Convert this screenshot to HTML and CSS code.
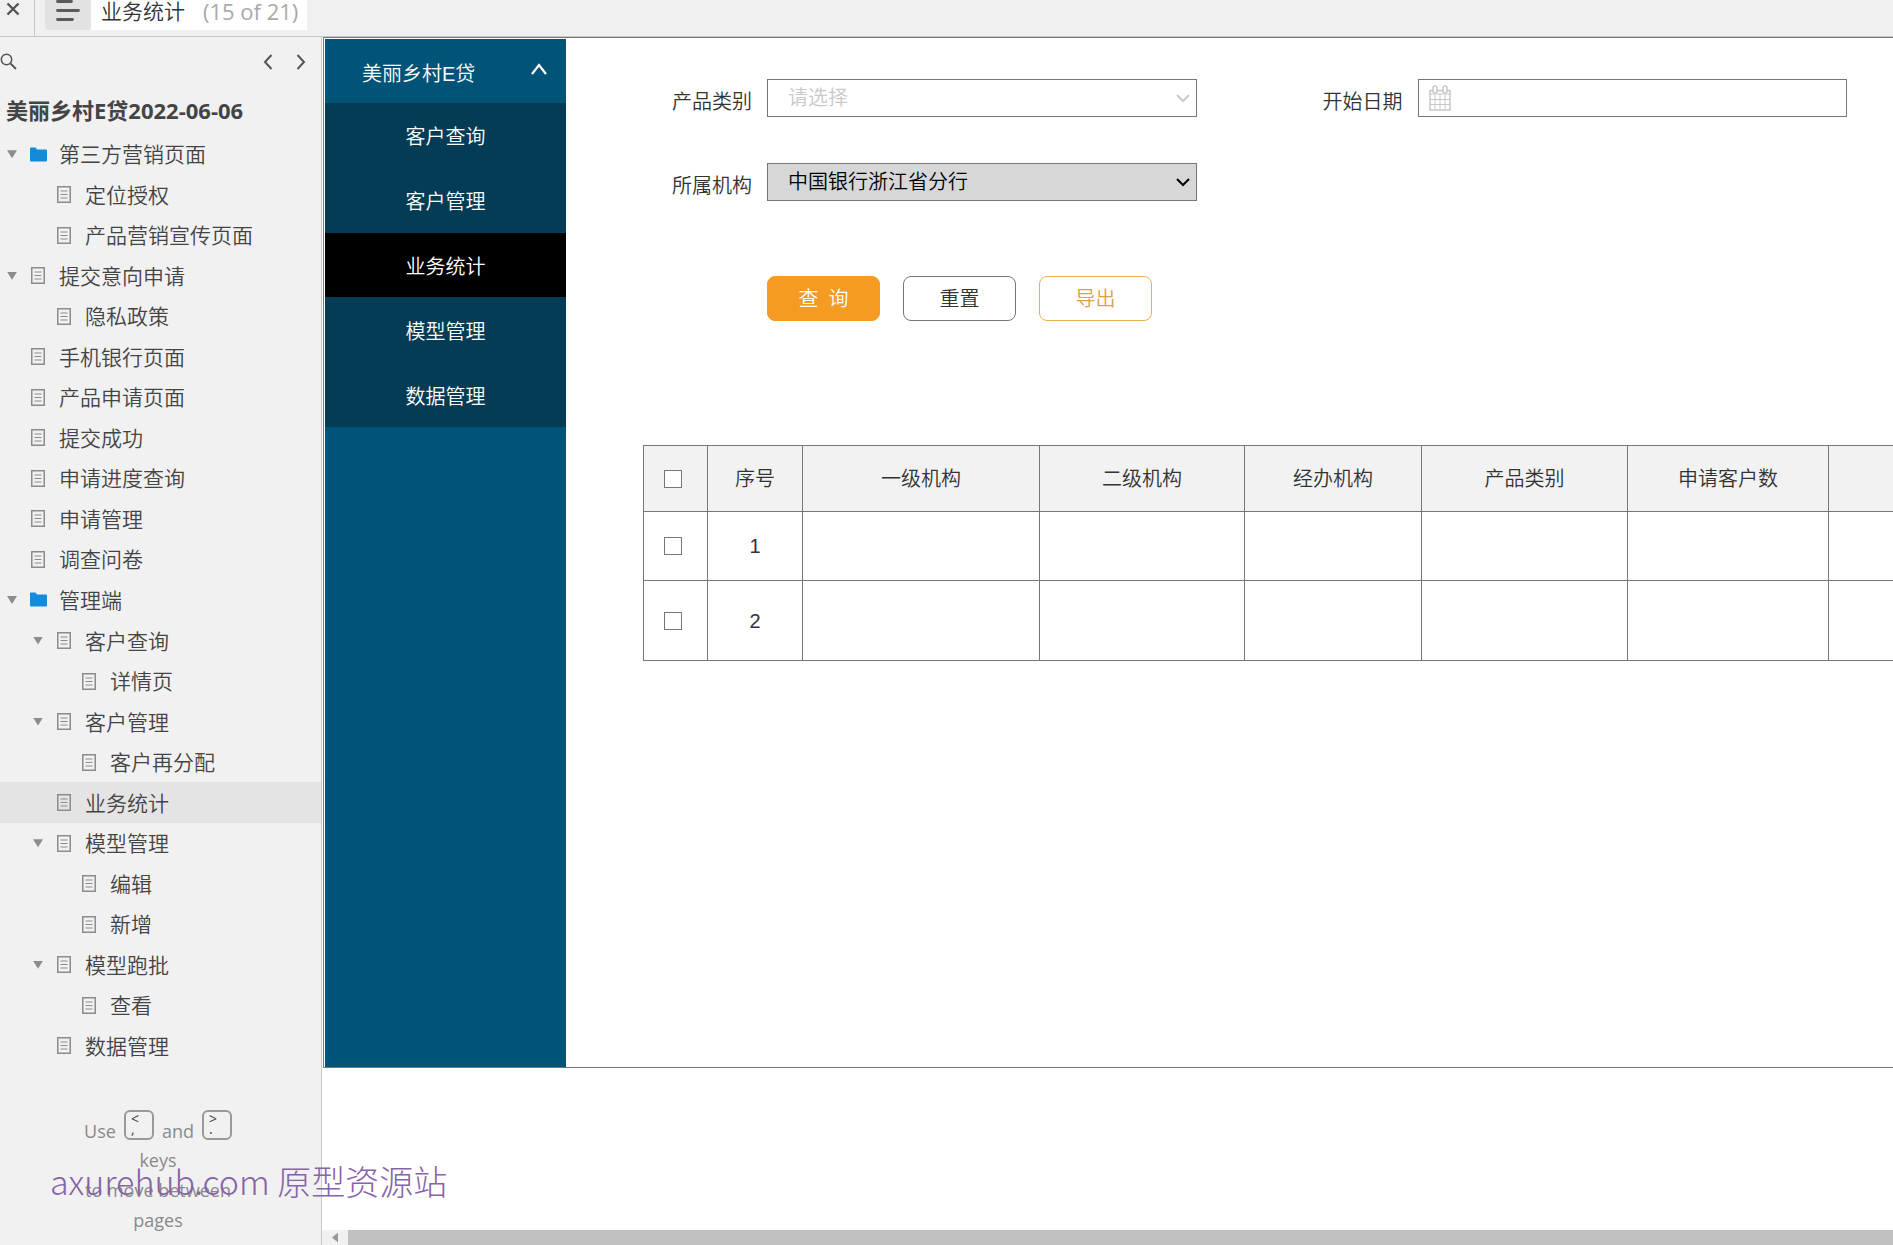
FILE: index.html
```html
<!DOCTYPE html>
<html lang="zh-CN">
<head>
<meta charset="utf-8">
<title>业务统计</title>
<link rel="stylesheet" href="styles.css">
</head>
<body>
<svg class="defs" aria-hidden="true">
  <symbol id="page" viewBox="0 0 14 17"><path d="M.75.75h12.5v15.5H.75z" fill="none" stroke="#8c8c8c" stroke-width="1.5"/><path d="M3.5 5h7M3.5 8.5h7M3.5 12h7" stroke="#8c8c8c" stroke-width="1.2"/></symbol>
  <symbol id="folder" viewBox="0 0 17 15"><path d="M0 1.5Q0 .5 1 .5h4.5L7 2.500h9q1 0 1 1V13.500q0 1-1 1H1q-1 0-1-1z" fill="#138bdb"/></symbol>
  <symbol id="chevron" viewBox="0 0 16 10"><path d="M2 2l6 6 6-6" fill="none" stroke="currentColor" stroke-width="2"/></symbol>
</svg>

<header class="topbar">
  <button class="close" aria-label="关闭"><svg width="14" height="14" viewBox="0 0 14 14"><path d="M1.500 1.500l11 11M12.500 1.500l-11 11" stroke="#555" stroke-width="2.400"/></svg></button>
  <button class="menu" aria-label="菜单"><svg width="24" height="22" viewBox="0 0 24 22"><path d="M1.500 1.500h14M1.500 10.500h21M1.500 19.500h15" stroke="#5a5a5a" stroke-width="2.800" stroke-linecap="round"/></svg></button>
  <div class="tab"><span>业务统计</span><span class="count">(15 of 21)</span></div>
</header>

<div class="body">
  <aside class="sidebar">
    <div class="tools">
      <button aria-label="搜索"><svg width="17" height="17" viewBox="0 0 17 17"><circle cx="6.500" cy="6.500" r="5.200" fill="none" stroke="#555" stroke-width="1.500"/><path d="M10.500 10.500l5.500 5.500" stroke="#555" stroke-width="1.800"/></svg></button>
      <span class="pager">
        <button aria-label="上一页"><svg width="10" height="16" viewBox="0 0 10 16"><path d="M8.500 1L2 8l6.500 7" fill="none" stroke="#555" stroke-width="2"/></svg></button>
        <button aria-label="下一页"><svg width="10" height="16" viewBox="0 0 10 16"><path d="M1.500 1L8 8l-6.500 7" fill="none" stroke="#555" stroke-width="2"/></svg></button>
      </span>
    </div>
    <h1>美丽乡村E贷2022-06-06</h1>
    <ul class="tree">
      <li class="open"><svg class="folder"><use href="#folder"/></svg><a href="#">第三方营销页面</a></li>
      <li class="l2"><svg><use href="#page"/></svg><a href="#">定位授权</a></li>
      <li class="l2"><svg><use href="#page"/></svg><a href="#">产品营销宣传页面</a></li>
      <li class="open"><svg><use href="#page"/></svg><a href="#">提交意向申请</a></li>
      <li class="l2"><svg><use href="#page"/></svg><a href="#">隐私政策</a></li>
      <li><svg><use href="#page"/></svg><a href="#">手机银行页面</a></li>
      <li><svg><use href="#page"/></svg><a href="#">产品申请页面</a></li>
      <li><svg><use href="#page"/></svg><a href="#">提交成功</a></li>
      <li><svg><use href="#page"/></svg><a href="#">申请进度查询</a></li>
      <li><svg><use href="#page"/></svg><a href="#">申请管理</a></li>
      <li><svg><use href="#page"/></svg><a href="#">调查问卷</a></li>
      <li class="open"><svg class="folder"><use href="#folder"/></svg><a href="#">管理端</a></li>
      <li class="l2 open"><svg><use href="#page"/></svg><a href="#">客户查询</a></li>
      <li class="l3"><svg><use href="#page"/></svg><a href="#">详情页</a></li>
      <li class="l2 open"><svg><use href="#page"/></svg><a href="#">客户管理</a></li>
      <li class="l3"><svg><use href="#page"/></svg><a href="#">客户再分配</a></li>
      <li class="l2 current"><svg><use href="#page"/></svg><a href="#">业务统计</a></li>
      <li class="l2 open"><svg><use href="#page"/></svg><a href="#">模型管理</a></li>
      <li class="l3"><svg><use href="#page"/></svg><a href="#">编辑</a></li>
      <li class="l3"><svg><use href="#page"/></svg><a href="#">新增</a></li>
      <li class="l2 open"><svg><use href="#page"/></svg><a href="#">模型跑批</a></li>
      <li class="l3"><svg><use href="#page"/></svg><a href="#">查看</a></li>
      <li class="l2"><svg><use href="#page"/></svg><a href="#">数据管理</a></li>
    </ul>
    <p class="hint">
      <span class="keys">Use <kbd><span>&lt;</span><span>,</span></kbd> and <kbd><span>&gt;</span><span>.</span></kbd></span>
      <span>keys</span>
      <span>to move between</span>
      <span>pages</span>
    </p>
    <div class="watermark">axurehub.com 原型资源站</div>
  </aside>

  <div class="stage">
    <div class="frame">
      <nav class="nav">
        <button class="nav-head">美丽乡村E贷<svg width="18" height="14" viewBox="0 0 18 14"><path d="M2 12l7-9 7 9" fill="none" stroke="#fff" stroke-width="2.200"/></svg></button>
        <div class="nav-items">
          <a href="#">客户查询</a>
          <a href="#">客户管理</a>
          <a href="#" class="active">业务统计</a>
          <a href="#">模型管理</a>
          <a href="#">数据管理</a>
        </div>
      </nav>
      <main>
        <form>
          <div class="fields">
            <div class="field">
              <label for="category">产品类别</label>
              <div class="control hollow">
                <select id="category"><option>请选择</option></select>
                <svg class="caret"><use href="#chevron"/></svg>
              </div>
            </div>
            <div class="field">
              <label for="start">开始日期</label>
              <div class="control">
                <input id="start" type="text">
                <svg class="calendar" viewBox="0 0 22 26"><g fill="none" stroke="#c8c8c8"><path d="M1 5.500h20v19.500H1z" stroke-width="1.500"/><path d="M1 9h20M1 14.500h20M1 19.500h20M6 9v16M11 9v16M16 9v16"/><rect x="4" y="1" width="4" height="7" rx="2" fill="#fff" stroke-width="1.500"/><rect x="14" y="1" width="4" height="7" rx="2" fill="#fff" stroke-width="1.500"/></g></svg>
              </div>
            </div>
            <div class="field">
              <label for="org">所属机构</label>
              <div class="control filled">
                <select id="org"><option>中国银行浙江省分行</option></select>
                <svg class="caret"><use href="#chevron"/></svg>
              </div>
            </div>
          </div>
          <div class="actions">
            <button type="button" class="primary">查&ensp;询</button>
            <button type="button">重置</button>
            <button type="button" class="export">导出</button>
          </div>
        </form>
        <table>
          <colgroup><col class="c-check"><col class="c-no"><col class="c-one"><col class="c-two"><col class="c-office"><col class="c-kind"><col class="c-sum"><col class="c-more"></colgroup>
          <thead>
            <tr><th><input type="checkbox" aria-label="全选"></th><th>序号</th><th>一级机构</th><th>二级机构</th><th>经办机构</th><th>产品类别</th><th>申请客户数</th><th></th></tr>
          </thead>
          <tbody>
            <tr><td><input type="checkbox" aria-label="选择 1"></td><td>1</td><td></td><td></td><td></td><td></td><td></td><td></td></tr>
            <tr class="tall"><td><input type="checkbox" aria-label="选择 2"></td><td>2</td><td></td><td></td><td></td><td></td><td></td><td></td></tr>
          </tbody>
        </table>
      </main>
    </div>
    <div class="scrollbar"><span class="arrow"></span><span class="thumb"></span></div>
  </div>
</div>
</body>
</html>
```
FILE: styles.css
```css
* { box-sizing: border-box; }

body {
  margin: 0;
  min-height: 100vh;
  display: flex;
  flex-direction: column;
  overflow: hidden;
  background: #fff;
  color: #333;
  font: 350 20px/30px "Liberation Sans", "Noto Sans CJK SC", sans-serif;
}

button, input, select { font: inherit; color: inherit; margin: 0; }
button { background: none; border: 0; padding: 0; }
svg { display: block; flex: none; }
a { color: inherit; text-decoration: none; }
.defs { position: absolute; width: 0; height: 0; }

/* top bar */
.topbar {
  display: flex;
  height: 37px;
  background: #f0f0f0;
  border-bottom: 1px solid #c3c9cc;
  font: 350 21px/22px "Open Sans", "Noto Sans CJK SC", sans-serif;
}
.close { width: 35px; padding: 2px 0 0 6px; border-right: 1px solid #c3c9cc; display: flex; }
.menu { width: 46px; height: 30px; margin-left: 10px; padding: 0 0 8px 11px; background: #e2e2e2; border-radius: 0 0 4px 4px; }
.tab { height: 30px; padding: 0 9px 0 10px; background: #fff; display: flex; gap: 18px; }
.count { color: #a9a9a9; font-size: 22px; font-weight: 400; }

.body { flex: 1; display: flex; }

/* page tree */
.sidebar {
  position: relative;
  flex: none;
  width: 322px;
  background: #f1f1f1;
  border-right: 1px solid #c8c8c8;
  font: 350 21px/30px "Open Sans", "Noto Sans CJK SC", sans-serif;
  color: #444;
}
.tools { display: flex; justify-content: space-between; padding: 16px 15px 0 0; }
.pager { display: flex; gap: 23px; }
h1 { margin: 24px 0 8px 6px; font-size: 22px; line-height: 32px; }
.tree {
  list-style: none;
  margin: 0;
  padding: 0;
  display: grid;
  grid-auto-rows: 1fr;
  min-height: 932px;
}
.tree li { display: flex; align-items: center; padding-left: 31px; }
.tree li.l2 { padding-left: 57px; }
.tree li.l3 { padding-left: 82px; }
.tree svg { width: 14px; height: 17px; margin-right: 14px; }
.tree svg.folder { width: 17px; height: 15px; margin: 0 12px 0 -1px; }
.tree .current { background: #e4e4e4; }
.tree .open::before {
  content: "";
  width: 10px;
  height: 8px;
  margin: 0 14px 0 -24px;
  background: #8c8c8c;
  clip-path: polygon(0 0, 100% 0, 50% 100%);
}
.hint {
  margin: 43px 0 0 82px;
  width: 152px;
  display: flex;
  flex-direction: column;
  align-items: center;
  font-size: 18px;
  font-weight: 400;
  line-height: 30px;
  color: #8a8a8a;
  white-space: nowrap;
}
.keys { display: flex; align-items: flex-end; gap: 8px; line-height: 24px; height: 34px; }
.keys + span { margin-top: 2px; }
kbd {
  width: 30px;
  height: 30px;
  margin-bottom: 3px;
  padding: 2px 0 0 5px;
  border: 2px solid #999;
  border-radius: 6px;
  display: flex;
  flex-direction: column;
  font: 14px/10px "Open Sans", sans-serif;
  color: #444;
}
.watermark {
  position: absolute;
  left: 50px;
  bottom: 40px;
  z-index: 1;
  font: 300 34px/48px "Noto Sans CJK SC", sans-serif;
  color: #8763a8;
  white-space: nowrap;
}

/* prototype canvas */
.stage { flex: 1; min-width: 0; display: flex; flex-direction: column; justify-content: space-between; }
.frame {
  display: flex;
  min-height: 1031px;
  margin-left: 1px;
  padding: 1px 0 0 1px;
  border: solid #777;
  border-width: 1px 0 1px 1px;
}
.nav { flex: none; width: 241px; background: #015478; color: #fff; }
.nav-head {
  width: 100%;
  height: 64px;
  padding: 5px 18px 0 37px;
  display: flex;
  align-items: center;
  justify-content: space-between;
}
.nav-head svg { margin-bottom: 9px; }
.nav-items { display: grid; grid-auto-rows: 1fr; min-height: 324px; background: #033c54; }
.nav-items a { display: flex; align-items: center; justify-content: center; padding-top: 4px; }
.nav-items .active { background: #000; }

main { flex: 1; min-width: 0; overflow: hidden; padding: 40px 0 0 77px; }
form { padding: 0 46px 0 29px; }
.fields { display: grid; grid-template-columns: 1fr 1fr; gap: 46px 126px; }
.field { display: flex; align-items: center; }
.field label { width: 95px; flex: none; padding-top: 8px; }
.control { position: relative; flex: 1; min-width: 0; }
.control select, .control input {
  display: block;
  width: 100%;
  height: 38px;
  padding: 0 20px;
  border: 1px solid #777;
  border-radius: 0;
  background: #fff;
  appearance: none;
}
.hollow { color: #c9c9c9; }
.filled { color: #000; }
.control.filled select { background: #d7d7d7; }
.caret { position: absolute; right: 6px; top: 14px; width: 16px; height: 10px; pointer-events: none; }
.calendar { position: absolute; left: 11px; top: 6px; width: 22px; height: 26px; }

.actions { display: flex; gap: 23px; margin: 75px 0 124px 95px; }
.actions button { width: 113px; height: 45px; border: 1px solid #777; border-radius: 8px; }
.actions .primary { background: #f59a23; border-color: #f59a23; color: #fff; }
.actions .export { border-color: #e8b04e; color: #dda045; }

/* results */
table { width: 1400px; table-layout: fixed; border-collapse: collapse; }
th, td { border: 1px solid #777; padding: 0; text-align: center; font-weight: 350; }
th { height: 66px; background: #f2f2f2; }
td { height: 69px; }
.tall td { height: 80px; }
.c-check { width: 64px; }
.c-no { width: 95px; }
.c-one { width: 237px; }
.c-two { width: 205px; }
.c-office { width: 177px; }
.c-kind { width: 206px; }
.c-sum { width: 201px; }
table input {
  appearance: none;
  display: block;
  width: 18px;
  height: 18px;
  margin: 0 0 0 20px;
  border: 1px solid #777;
  background: #fff;
}

.scrollbar { display: flex; align-items: center; height: 15px; background: #f1f1f1; }
.arrow { width: 6px; height: 10px; margin: 0 10px; background: #999; clip-path: polygon(100% 0, 100% 100%, 0 50%); }
.thumb { flex: 1; height: 15px; background: #c1c1c1; }
```
